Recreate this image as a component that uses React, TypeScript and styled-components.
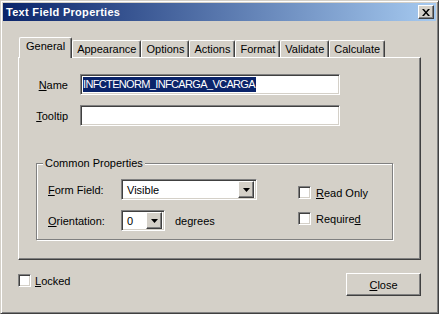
import * as React from 'react';
import styled, { createGlobalStyle, css } from 'styled-components';

const FACE = '#d4d0c8';

const GlobalStyle = createGlobalStyle`
  html, body {
    margin: 0;
    padding: 0;
    background: ${FACE};
  }
  body {
    font-family: 'Liberation Sans', Arial, sans-serif;
    font-size: 11px;
    color: #000;
  }
  * {
    box-sizing: border-box;
  }
`;

const raised = css`
  border: 1px solid;
  border-color: #fff #404040 #404040 #fff;
  box-shadow: inset -1px -1px #808080;
  background: ${FACE};
`;

const sunken = css`
  border: 1px solid;
  border-color: #808080 #fff #fff #808080;
  box-shadow: inset 1px 1px #404040, inset -1px -1px ${FACE};
  background: #fff;
`;

const Window = styled.div`
  width: 439px;
  height: 314px;
  display: flex;
  flex-direction: column;
  padding: 2px;
  background: ${FACE};
  border: 1px solid;
  border-color: ${FACE} #404040 #404040 ${FACE};
  box-shadow: inset 1px 1px #fff, inset -1px -1px #808080;
`;

const TitleBar = styled.div`
  height: 18px;
  display: flex;
  align-items: center;
  justify-content: space-between;
  padding: 0 2px 0 3px;
  background: linear-gradient(to right, #0a246a, #a6caf0);
  color: #fff;
`;

const TitleText = styled.span`
  font-weight: bold;
  font-size: 11px;
  letter-spacing: 0.3px;
`;

const TitleButton = styled.div`
  ${raised};
  width: 16px;
  height: 14px;
  display: flex;
  align-items: center;
  justify-content: center;
`;

const Body = styled.div`
  flex: 1;
  padding: 16px 15px 0 15px;
`;

const TabStrip = styled.div`
  height: 20px;
  display: flex;
  align-items: flex-end;
  padding-left: 1px;
`;

const Tab = styled.div<{ $active?: boolean }>`
  position: relative;
  height: ${p => (p.$active ? '21px' : '17px')};
  margin-bottom: ${p => (p.$active ? '-1px' : '0')};
  padding: ${p => (p.$active ? '2px 6px 0 6px' : '2px 4px 0 4px')};
  z-index: ${p => (p.$active ? 2 : 1)};
  background: ${FACE};
  border-top: 1px solid #fff;
  border-left: 1px solid #fff;
  border-right: 1px solid #404040;
  border-radius: 2px 2px 0 0;
  box-shadow: inset -1px 0 #808080;
  line-height: 13px;
  white-space: nowrap;
`;

const Panel = styled.div`
  position: relative;
  z-index: 0;
  height: 203px;
  padding-top: 16px;
  border: 1px solid;
  border-color: #fff #404040 #404040 #fff;
  box-shadow: inset -1px -1px #808080;
`;

const FieldGrid = styled.div`
  display: grid;
  grid-template-columns: 49px 260px;
  grid-auto-rows: 21px;
  column-gap: 12px;
  row-gap: 10px;
  align-items: center;
`;

const FieldLabel = styled.label`
  text-align: right;
`;

const TextBox = styled.div`
  ${sunken};
  height: 21px;
  display: flex;
  align-items: center;
  padding: 0 2px;
`;

const SelectedText = styled.span`
  background: #0a246a;
  color: #fff;
  line-height: 15px;
  letter-spacing: -0.65px;
  padding-right: 1px;
`;

const GroupBox = styled.fieldset`
  width: 357px;
  margin: 31px 0 0 17px;
  padding: 0 0 8px 0;
  border: 1px solid #808080;
  box-shadow: inset 1px 1px #fff, 1px 1px #fff;
`;

const GroupLegend = styled.legend`
  margin-left: 6px;
  padding: 0 2px;
  line-height: 13px;
  background: ${FACE};
`;

const GroupContent = styled.div`
  display: flex;
  padding: 9px 0 0 11px;
`;

const ComboGrid = styled.div`
  display: grid;
  grid-template-columns: 73px 136px;
  grid-auto-rows: 21px;
  row-gap: 10px;
  align-items: center;
`;

const ComboRow = styled.div`
  display: flex;
  align-items: center;
  gap: 10px;
`;

const ComboBox = styled.div<{ $width: number }>`
  ${sunken};
  width: ${p => p.$width}px;
  height: 21px;
  display: flex;
  align-items: center;
  justify-content: space-between;
  padding: 2px 2px 2px 5px;
`;

const DropButton = styled.div`
  ${raised};
  width: 16px;
  height: 17px;
  display: flex;
  align-items: center;
  justify-content: center;
`;

const CheckColumn = styled.div`
  display: flex;
  flex-direction: column;
  gap: 13px;
  margin-left: 41px;
  padding-top: 7px;
`;

const CheckRow = styled.label<{ $gap?: number }>`
  display: flex;
  align-items: center;
  gap: ${p => p.$gap ?? 5}px;
  height: 13px;
`;

const CheckBox = styled.span`
  ${sunken};
  width: 13px;
  height: 13px;
  flex: none;
`;

const Footer = styled.div`
  display: flex;
  justify-content: space-between;
  align-items: flex-start;
  margin-top: 13px;
`;

const LockedRow = styled(CheckRow)`
  margin-top: 1px;
`;

const PushButton = styled.button`
  ${raised};
  width: 75px;
  height: 23px;
  padding: 0;
  font: inherit;
  color: #000;
`;

const CloseGlyph = () => (
  <svg width="8" height="7" viewBox="0 0 8 7">
    <path d="M0 0h2l2 2.5L6 0h2L5 3.5 8 7H6L4 4.5 2 7H0l3-3.5z" fill="#000" />
  </svg>
);

const DownArrow = () => (
  <svg width="7" height="4" viewBox="0 0 7 4">
    <path d="M0 0h7L3.5 4z" fill="#000" />
  </svg>
);

const tabs = ['General', 'Appearance', 'Options', 'Actions', 'Format', 'Validate', 'Calculate'];

const App = () => {
  return (
    <>
      <GlobalStyle />
      <Window>
        <TitleBar>
          <TitleText>Text Field Properties</TitleText>
          <TitleButton><CloseGlyph /></TitleButton>
        </TitleBar>
        <Body>
          <TabStrip>
            {tabs.map((t, i) => (
              <Tab key={t} $active={i === 0}>{t}</Tab>
            ))}
          </TabStrip>
          <Panel>
            <FieldGrid>
              <FieldLabel><u>N</u>ame</FieldLabel>
              <TextBox><SelectedText>INFCTENORM_INFCARGA_VCARGA</SelectedText></TextBox>
              <FieldLabel><u>T</u>ooltip</FieldLabel>
              <TextBox />
            </FieldGrid>
            <GroupBox>
              <GroupLegend>Common Properties</GroupLegend>
              <GroupContent>
                <ComboGrid>
                  <span><u>F</u>orm Field:</span>
                  <ComboBox $width={136}>
                    Visible
                    <DropButton><DownArrow /></DropButton>
                  </ComboBox>
                  <span><u>O</u>rientation:</span>
                  <ComboRow>
                    <ComboBox $width={44}>
                      0
                      <DropButton><DownArrow /></DropButton>
                    </ComboBox>
                    degrees
                  </ComboRow>
                </ComboGrid>
                <CheckColumn>
                  <CheckRow><CheckBox /><span><u>R</u>ead Only</span></CheckRow>
                  <CheckRow><CheckBox /><span>Require<u>d</u></span></CheckRow>
                </CheckColumn>
              </GroupContent>
            </GroupBox>
          </Panel>
          <Footer>
            <LockedRow $gap={4}><CheckBox /><span><u>L</u>ocked</span></LockedRow>
            <PushButton><u>C</u>lose</PushButton>
          </Footer>
        </Body>
      </Window>
    </>
  );
};

export default App;
